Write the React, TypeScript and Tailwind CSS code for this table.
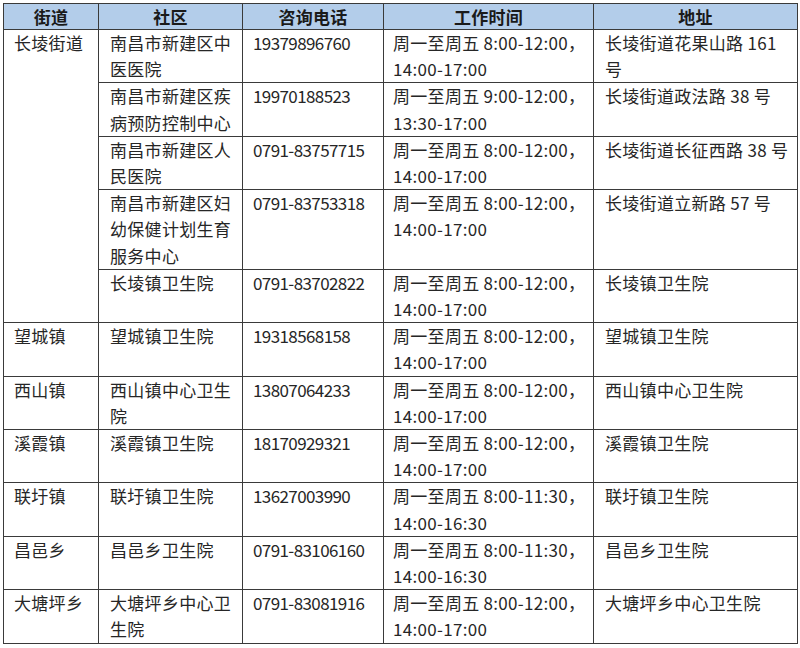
import React from "react";

type Row = {
  street?: { text: string; span: number };
  org: string[];
  phone: string;
  time: string[];
  addr: string[];
};

const T1 = ["周一至周五 8:00-12:00，", "14:00-17:00"];
const T2 = ["周一至周五 9:00-12:00，", "13:30-17:00"];
const T3 = ["周一至周五 8:00-11:30，", "14:00-16:30"];

const rows: Row[] = [
  { street: { text: "长堎街道", span: 5 }, org: ["南昌市新建区中", "医医院"], phone: "19379896760", time: T1, addr: ["长堎街道花果山路 161", "号"] },
  { org: ["南昌市新建区疾", "病预防控制中心"], phone: "19970188523", time: T2, addr: ["长堎街道政法路 38 号"] },
  { org: ["南昌市新建区人", "民医院"], phone: "0791-83757715", time: T1, addr: ["长堎街道长征西路 38 号"] },
  { org: ["南昌市新建区妇", "幼保健计划生育", "服务中心"], phone: "0791-83753318", time: T1, addr: ["长堎街道立新路 57 号"] },
  { org: ["长堎镇卫生院"], phone: "0791-83702822", time: T1, addr: ["长堎镇卫生院"] },
  { street: { text: "望城镇", span: 1 }, org: ["望城镇卫生院"], phone: "19318568158", time: T1, addr: ["望城镇卫生院"] },
  { street: { text: "西山镇", span: 1 }, org: ["西山镇中心卫生", "院"], phone: "13807064233", time: T1, addr: ["西山镇中心卫生院"] },
  { street: { text: "溪霞镇", span: 1 }, org: ["溪霞镇卫生院"], phone: "18170929321", time: T1, addr: ["溪霞镇卫生院"] },
  { street: { text: "联圩镇", span: 1 }, org: ["联圩镇卫生院"], phone: "13627003990", time: T3, addr: ["联圩镇卫生院"] },
  { street: { text: "昌邑乡", span: 1 }, org: ["昌邑乡卫生院"], phone: "0791-83106160", time: T3, addr: ["昌邑乡卫生院"] },
  { street: { text: "大塘坪乡", span: 1 }, org: ["大塘坪乡中心卫", "生院"], phone: "0791-83081916", time: T1, addr: ["大塘坪乡中心卫生院"] },
];

function Lines({ lines }: { lines: string[] }) {
  return (
    <>
      {lines.map((l, i) => (
        <div key={i} className="whitespace-pre">
          {l}
        </div>
      ))}
    </>
  );
}

const cell = "border border-[#3a3a3a] align-top p-0 leading-[26.2px] whitespace-nowrap overflow-hidden";

export default function App() {
  return (
    <div
      className="w-[800px] h-[648px] bg-white pt-[3px] pl-[3px] text-[#262626] text-[17px] tracking-[0.3px]"
      style={{ fontFamily: '"Noto Sans CJK SC", "Noto Sans", sans-serif' }}
    >
      <table className="border-collapse table-fixed w-[794px]">
        <colgroup>
          <col className="w-[95px]" />
          <col className="w-[144px]" />
          <col className="w-[141px]" />
          <col className="w-[210px]" />
          <col className="w-[204px]" />
        </colgroup>
        <thead>
          <tr className="bg-[#b3cdea]">
            {["街道", "社区", "咨询电话", "工作时间", "地址"].map((h) => (
              <th key={h} className="border border-[#3a3a3a] p-0 leading-[25px] font-bold text-center text-[#1a1a1a]">
                {h}
              </th>
            ))}
          </tr>
        </thead>
        <tbody>
          {rows.map((r, i) => (
            <tr key={i}>
              {r.street && (
                <td rowSpan={r.street.span} className={`${cell} pl-[10px]`}>
                  {r.street.text}
                </td>
              )}
              <td className={`${cell} pl-[11px]`}>
                <Lines lines={r.org} />
              </td>
              <td className={`${cell} pl-[10px] tracking-[-0.6px]`}>{r.phone}</td>
              <td className={`${cell} pl-[9px]`}>
                <Lines lines={r.time} />
              </td>
              <td className={`${cell} pl-[11px]`}>
                <Lines lines={r.addr} />
              </td>
            </tr>
          ))}
        </tbody>
      </table>
    </div>
  );
}
